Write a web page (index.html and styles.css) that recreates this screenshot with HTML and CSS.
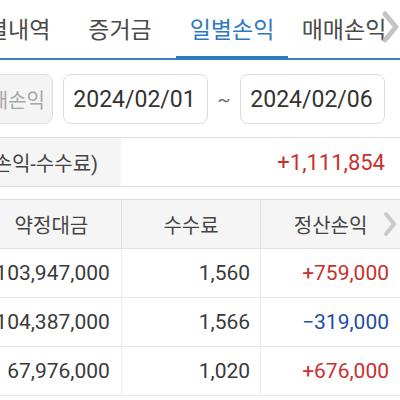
FILE: index.html
```html
<!DOCTYPE html>
<html lang="ko">
<head>
<meta charset="utf-8">
<link rel="stylesheet" href="styles.css">
</head>
<body>
<div class="page">
  <nav class="tabs">
    <div class="tab">체결내역</div>
    <div class="tab">증거금</div>
    <div class="tab tab-active">일별손익</div>
    <div class="tab">매매손익</div>
    <div class="tabs-more">
      <svg width="20" height="36" viewBox="0 0 20 36"><path d="M5 5 L16 18 L5 31" fill="none" stroke="#c4c4c4" stroke-width="5" stroke-linecap="round" stroke-linejoin="round"/></svg>
    </div>
  </nav>

  <div class="filter">
    <div class="filter-btn">매매손익</div>
    <div class="date-box">2024/02/01</div>
    <div class="tilde">~</div>
    <div class="date-box">2024/02/06</div>
  </div>

  <div class="summary">
    <div class="summary-label">(매매손익-수수료)</div>
    <div class="summary-value up">+1,111,854</div>
  </div>

  <table class="grid">
    <thead>
      <tr>
        <th>약정대금</th>
        <th>수수료</th>
        <th class="th-last">정산손익
          <svg class="th-chev" width="16" height="28" viewBox="0 0 16 28"><path d="M4 4 L12 14 L4 24" fill="none" stroke="#c9c9c9" stroke-width="4" stroke-linecap="round" stroke-linejoin="round"/></svg>
        </th>
      </tr>
    </thead>
    <tbody>
      <tr><td>103,947,000</td><td>1,560</td><td class="up">+759,000</td></tr>
      <tr><td>104,387,000</td><td>1,566</td><td class="down">−319,000</td></tr>
      <tr><td>67,976,000</td><td>1,020</td><td class="up">+676,000</td></tr>
    </tbody>
  </table>
</div>
</body>
</html>
```

FILE: styles.css
```css
html, body {
  margin: 0;
  padding: 0;
  background: #ffffff;
}
body {
  width: 400px;
  height: 400px;
  overflow: hidden;
  font-family: Roboto, "Noto Sans CJK KR", sans-serif;
  color: #383838;
}
.page {
  width: 400px;
  position: relative;
}

/* Tabs */
.tabs {
  display: flex;
  align-items: stretch;
  height: 58px;
  border-bottom: 2px solid #3a80c6;
  margin-left: -48px;
  width: 448px;
  position: relative;
}
.tab {
  width: 112px;
  flex: none;
  display: flex;
  align-items: center;
  justify-content: center;
  font-size: 23px;
  color: #4a4a4a;
  white-space: nowrap;
  box-sizing: border-box;
  padding-bottom: 2px;
}
.tab-active {
  color: #2f78c2;
  border-bottom: 4px solid #2f78c2;
  margin-bottom: -2px;
  padding-bottom: 0;
}
.tabs-more {
  position: absolute;
  right: 0;
  top: 8px;
  width: 20px;
  height: 38px;
  display: flex;
  align-items: center;
  justify-content: flex-end;
}

/* Filter */
.filter {
  display: flex;
  align-items: center;
  margin-top: 14px;
  height: 50px;
  margin-left: -40px;
}
.filter-btn {
  width: 93px;
  height: 50px;
  box-sizing: border-box;
  border: 1px solid #e0e0e0;
  border-radius: 8px;
  background: #f4f4f4;
  color: #a8a8a8;
  font-size: 20px;
  display: flex;
  align-items: center;
  justify-content: flex-end;
  padding-right: 7px;
  white-space: nowrap;
  overflow: hidden;
  margin-right: 10px;
}
.date-box {
  width: 145px;
  height: 50px;
  box-sizing: border-box;
  border: 1px solid #dcdcdc;
  border-radius: 8px;
  display: flex;
  align-items: center;
  justify-content: center;
  font-size: 23px;
  color: #333;
  padding-right: 2px;
}
.tilde {
  width: 32px;
  text-align: center;
  font-size: 19px;
  color: #666;
}

/* Summary */
.summary {
  display: flex;
  margin-top: 13px;
  height: 50px;
  border-top: 1px solid #dedede;
  border-bottom: 1px solid #dedede;
  margin-left: -18px;
  width: 418px;
  box-sizing: border-box;
}
.summary-label {
  width: 139px;
  background: #f5f5f5;
  display: flex;
  align-items: center;
  justify-content: flex-end;
  padding-right: 23px;
  box-sizing: border-box;
  font-size: 20px;
  color: #444;
  white-space: nowrap;
}
.summary-value {
  flex: 1;
  display: flex;
  align-items: center;
  justify-content: flex-end;
  padding-right: 15px;
  font-size: 22px;
}

.up { color: #c8302e; }
.down { color: #1e4f9f; }

/* Grid */
.grid {
  margin-top: 12px;
  margin-left: -18px;
  width: 418px;
  border-collapse: collapse;
  table-layout: fixed;
}
.grid th {
  height: 48px;
  background: #f5f5f5;
  border-top: 1px solid #dedede;
  border-bottom: 1px solid #e2e2e2;
  border-right: 1px solid #e0e0e0;
  font-weight: normal;
  font-size: 20px;
  color: #444;
  padding: 0;
  text-align: center;
}
.grid th:last-child,
.grid td:last-child {
  border-right: none;
}
.th-last {
  position: relative;
}
.th-chev {
  position: absolute;
  right: 2px;
  top: 10px;
}
.grid td {
  height: 48px;
  border-bottom: 1px solid #e8e8e8;
  border-right: 1px solid #ececec;
  text-align: right;
  padding: 0 11px 0 0;
  font-size: 21px;
  color: #3a3a3a;
}
.grid td:nth-child(2) {
  padding-right: 10px;
}
.grid td.up { color: #c8302e; }
.grid td.down { color: #1e4f9f; }
```
